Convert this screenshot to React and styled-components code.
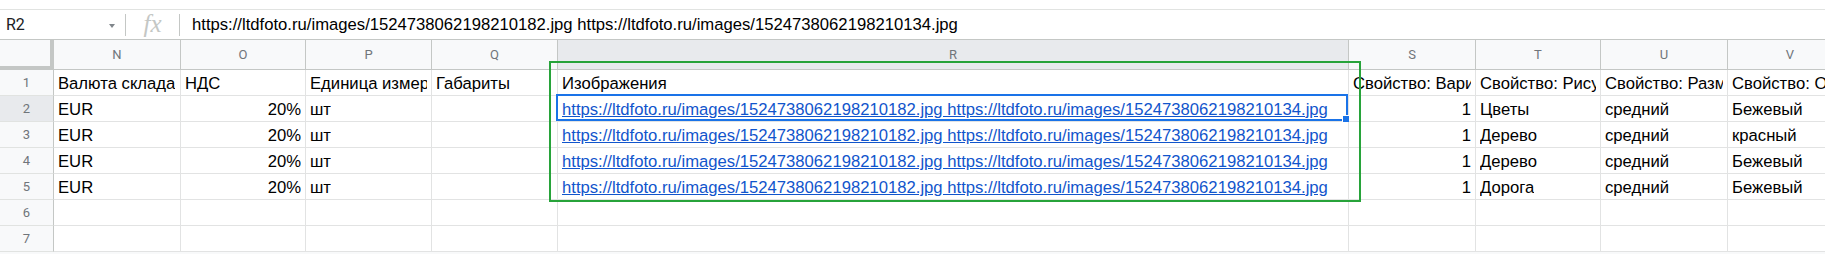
import React from "react";
import styled, { createGlobalStyle } from "styled-components";

const GlobalStyle = createGlobalStyle`
  html, body {
    margin: 0;
    padding: 0;
    background: #fff;
  }
  body {
    width: 1825px;
    height: 254px;
    overflow: hidden;
    font-family: "Liberation Sans", Arial, sans-serif;
  }
`;

const Page = styled.div`
  width: 1825px;
  height: 254px;
  overflow: hidden;
  background: #f8f9fa;
  display: flex;
  flex-direction: column;
`;

const TopStrip = styled.div`
  height: 9px;
  flex: none;
  background: #fff;
`;

const FormulaBar = styled.div`
  height: 31px;
  flex: none;
  box-sizing: border-box;
  border-top: 1px solid #e1e3e1;
  border-bottom: 1px solid #c4c7c5;
  background: #fff;
  display: flex;
  align-items: center;
`;

const NameBox = styled.div`
  width: 125px;
  box-sizing: border-box;
  padding: 0 10px 0 6px;
  display: flex;
  align-items: center;
  justify-content: space-between;
  font-family: Roboto, sans-serif;
  font-size: 16px;
  color: #202124;
`;

const Caret = styled.span`
  width: 0;
  height: 0;
  border-left: 3.5px solid transparent;
  border-right: 3.5px solid transparent;
  border-top: 4px solid #80868b;
  margin-top: 3px;
`;

const Divider = styled.div`
  width: 1px;
  height: 22px;
  background: #c4c7c5;
`;

const Fx = styled.div`
  width: 53px;
  text-align: center;
  font-family: "Liberation Serif", serif;
  font-style: italic;
  font-size: 25px;
  line-height: 28px;
  color: #c4c7c5;
  padding-bottom: 2px;
`;

const FormulaText = styled.div`
  padding-left: 12px;
  font-size: 16.67px;
  color: #000;
  white-space: nowrap;
`;

const Grid = styled.div`
  position: relative;
  flex: none;
  display: grid;
  grid-template-columns: 54px 127px 125px 126px 126px 791px 127px 125px 127px 125px;
  grid-template-rows: 30px repeat(7, 26px);
  width: max-content;
  background: #fff;
`;

const Corner = styled.div`
  background: #f8f9fa;
  border-right: 4px solid #c4c7c5;
  border-bottom: 4px solid #c4c7c5;
`;

const ColHead = styled.div`
  box-sizing: border-box;
  background: ${(p) => (p.$active ? "#e8eaed" : "#f8f9fa")};
  border-right: 1px solid #c4c7c5;
  border-bottom: 1px solid #c4c7c5;
  display: flex;
  align-items: center;
  justify-content: center;
  font-family: Roboto, sans-serif;
  font-size: 13px;
  color: #70757a;
`;

const RowHead = styled.div`
  box-sizing: border-box;
  background: ${(p) => (p.$active ? "#e8eaed" : "#f8f9fa")};
  border-right: 1px solid #c4c7c5;
  border-bottom: 1px solid #e1e3e1;
  display: flex;
  align-items: center;
  justify-content: center;
  font-family: Roboto, sans-serif;
  font-size: 13px;
  color: #70757a;
`;

const Cell = styled.div`
  position: relative;
  box-sizing: border-box;
  min-width: 0;
  border-right: 1px solid #e2e3e3;
  border-bottom: 1px solid #e2e3e3;
  padding: 0 4px 2px;
  display: flex;
  align-items: flex-end;
  justify-content: ${(p) => (p.$right ? "flex-end" : "flex-start")};
`;

const CellText = styled.span`
  display: block;
  overflow: hidden;
  white-space: nowrap;
  max-width: 100%;
  font-size: 16.67px;
  line-height: 19px;
  color: #000;
`;

const Link = styled(CellText)`
  color: #1155cc;
  text-decoration: underline;
`;

const Selection = styled.div`
  position: absolute;
  top: -2px;
  left: -2px;
  right: 0;
  bottom: 0;
  border: 2px solid #1a73e8;
  pointer-events: none;
`;

const Handle = styled.div`
  position: absolute;
  right: -4px;
  bottom: -4px;
  width: 6px;
  height: 6px;
  background: #1a73e8;
  border: 1px solid #fff;
`;

const RangeFrame = styled.div`
  position: absolute;
  top: 21px;
  left: 549px;
  width: 812px;
  height: 141px;
  box-sizing: border-box;
  border: 2px solid #27a33a;
  pointer-events: none;
`;

const url =
  "https://ltdfoto.ru/images/1524738062198210182.jpg https://ltdfoto.ru/images/1524738062198210134.jpg";

const columns = ["N", "O", "P", "Q", "R", "S", "T", "U", "V"];

const header = [
  "Валюта склада",
  "НДС",
  "Единица измерения",
  "Габариты",
  "Изображения",
  "Свойство: Вариант",
  "Свойство: Рисунок",
  "Свойство: Размер",
  "Свойство: Оттенок",
];

const rows = [
  ["Цветы", "средний", "Бежевый"],
  ["Дерево", "средний", "красный"],
  ["Дерево", "средний", "Бежевый"],
  ["Дорога", "средний", "Бежевый"],
];

const App = () => {
  return (
    <Page>
      <GlobalStyle />
      <TopStrip />
      <FormulaBar>
        <NameBox>
          R2
          <Caret />
        </NameBox>
        <Divider />
        <Fx>fx</Fx>
        <Divider />
        <FormulaText>{url}</FormulaText>
      </FormulaBar>

      <Grid>
        <Corner />
        {columns.map((c) => (
          <ColHead key={c} $active={c === "R"}>
            {c}
          </ColHead>
        ))}

        <RowHead>1</RowHead>
        {header.map((h, i) => (
          <Cell key={i}>
            <CellText>{h}</CellText>
          </Cell>
        ))}

        {rows.map((r, index) => (
          <React.Fragment key={index}>
            <RowHead $active={index === 0}>{index + 2}</RowHead>
            <Cell>
              <CellText>EUR</CellText>
            </Cell>
            <Cell $right>
              <CellText>20%</CellText>
            </Cell>
            <Cell>
              <CellText>шт</CellText>
            </Cell>
            <Cell />
            <Cell>
              <Link>{url}</Link>
              {index === 0 && (
                <Selection>
                  <Handle />
                </Selection>
              )}
            </Cell>
            <Cell $right>
              <CellText>1</CellText>
            </Cell>
            <Cell>
              <CellText>{r[0]}</CellText>
            </Cell>
            <Cell>
              <CellText>{r[1]}</CellText>
            </Cell>
            <Cell>
              <CellText>{r[2]}</CellText>
            </Cell>
          </React.Fragment>
        ))}

        {[6, 7].map((n) => (
          <React.Fragment key={n}>
            <RowHead>{n}</RowHead>
            {columns.map((c) => (
              <Cell key={c} />
            ))}
          </React.Fragment>
        ))}

        <RangeFrame />
      </Grid>
    </Page>
  );
};

export default App;
